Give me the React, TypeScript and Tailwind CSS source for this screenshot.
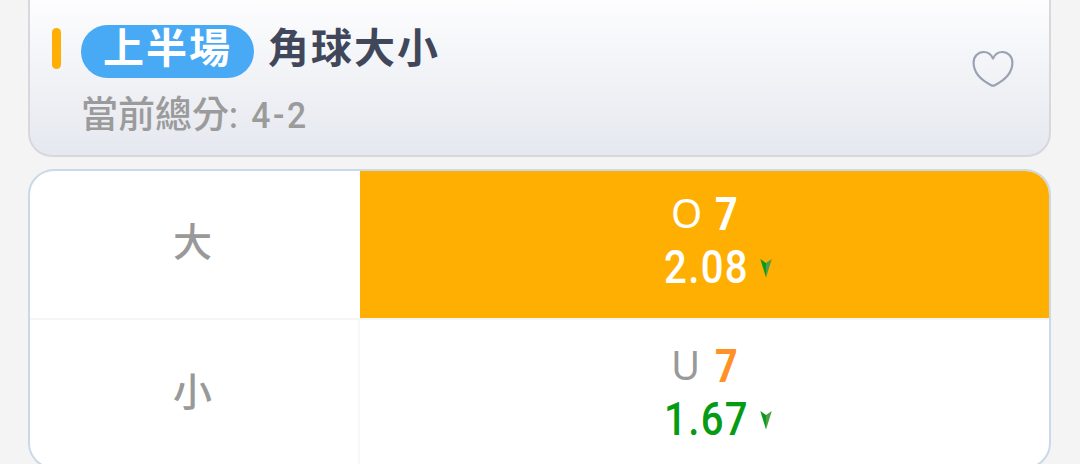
import clsx from "clsx";

interface Odds {
  label: string;
  side: string;
  line: string;
  price: string;
  selected: boolean;
}

const ROWS: Odds[] = [
  { label: "大", side: "O", line: "7", price: "2.08", selected: true },
  { label: "小", side: "U", line: "7", price: "1.67", selected: false },
];

function HeartIcon() {
  return (
    <svg className="mt-[50px] mr-[35px] h-[38px] w-[42px]" viewBox="0 0 42 38" fill="none">
      <path
        d="M21 8.6C19.2 4.5 15.7 2 11.6 2C6 2 1.6 6.6 1.6 12.6C1.6 22.5 9.5 30.4 19.2 35.2Q21 36.2 22.8 35.2C32.5 30.4 40.4 22.5 40.4 12.6C40.4 6.6 36 2 30.4 2C26.3 2 22.8 4.5 21 8.6Z"
        stroke="#98a2b3"
        strokeWidth="2.2"
        strokeLinejoin="round"
      />
    </svg>
  );
}

function DropIcon() {
  return (
    <svg className="mt-[3px] h-[20px] w-[12px]" viewBox="0 0 12 20">
      <path d="M0.3 1L6 5V19.5Z" fill="#0c9a1c" />
      <path d="M11.8 1L6 5V19.5Z" fill="#4b9f45" />
    </svg>
  );
}

function OddsRow({ row }: { row: Odds }) {
  return (
    <div className={clsx("flex border-b-2 border-[#f5f5f5]", row.selected ? "h-[149px]" : "h-[152px]")}>
      <div className="flex w-[330px] items-center justify-center pb-[11px] pr-[5px] text-[39px] font-medium leading-none text-[#999]">
        {row.label}
      </div>
      <div
        className={clsx(
          "flex-1",
          row.selected ? "bg-[#ffaf02] pt-[17px]" : "pt-[20px] shadow-[-2px_0_0_#f8f8f8]",
        )}
      >
        <div className="ml-[311px] flex h-[52px] items-center">
          <span
            className={clsx(
              "w-[44px] font-['Noto_Sans',sans-serif] text-[40px] leading-[52px]",
              row.selected ? "pb-[2px] text-white" : "pb-[3px] text-[#999]",
            )}
          >
            {row.side}
          </span>
          <span
            className={clsx(
              "origin-left scale-x-[0.86] font-['Roboto',sans-serif] text-[46px] font-bold leading-[52px]",
              row.selected ? "text-white" : "text-[#ff9126]",
            )}
          >
            {row.line}
          </span>
        </div>
        <div className="ml-[304px] flex h-[52px] items-center">
          <span
            className={clsx(
              "w-[96px] origin-left scale-x-[0.87] pt-px font-['Roboto',sans-serif] text-[46px] font-medium leading-[52px] tracking-[1.6px]",
              row.selected ? "text-white" : "text-[#059b14]",
            )}
          >
            {row.price}
          </span>
          <DropIcon />
        </div>
      </div>
    </div>
  );
}

export default function App() {
  return (
    <main className="h-[464px] overflow-hidden bg-[#f4f4f4] pl-[28px] pr-[29px] font-['Noto_Sans_CJK_TC',sans-serif]">
      <header className="flex h-[157px] justify-between rounded-b-[24px] border-2 border-t-0 border-[#d8d8dc] bg-linear-to-b from-[#fdfdfe] to-[#e5e8ef]">
        <div className="flex">
          <div className="ml-[22px] mt-[28px] h-[41px] w-[9px] rounded-full bg-[#ffae04]" />
          <div className="ml-[20px]">
            <div className="flex pt-[25px]">
              <span className="flex h-[53px] w-[173px] justify-center rounded-full bg-[#48a9f4] text-[41px] font-bold leading-[41px] tracking-[2px] text-white">
                上半場
              </span>
              <h1 className="ml-[14px] text-[41px] font-bold leading-[41px] tracking-[2px] text-[#40475a]">角球大小</h1>
            </div>
            <p className="mt-[9px] text-[37px] font-medium leading-[50px] text-[#9b9b9b]">
              當前總分
              <span className="inline-block origin-left scale-x-[0.91] font-['Roboto',sans-serif] font-medium tracking-[2.8px]">
                : 4-2
              </span>
            </p>
          </div>
        </div>
        <HeartIcon />
      </header>
      <section className="mt-[12px] h-[300px] overflow-hidden rounded-[26px] border-2 border-[#cbd8e6] bg-white">
        {ROWS.map((row) => (
          <OddsRow key={row.label} row={row} />
        ))}
      </section>
    </main>
  );
}
